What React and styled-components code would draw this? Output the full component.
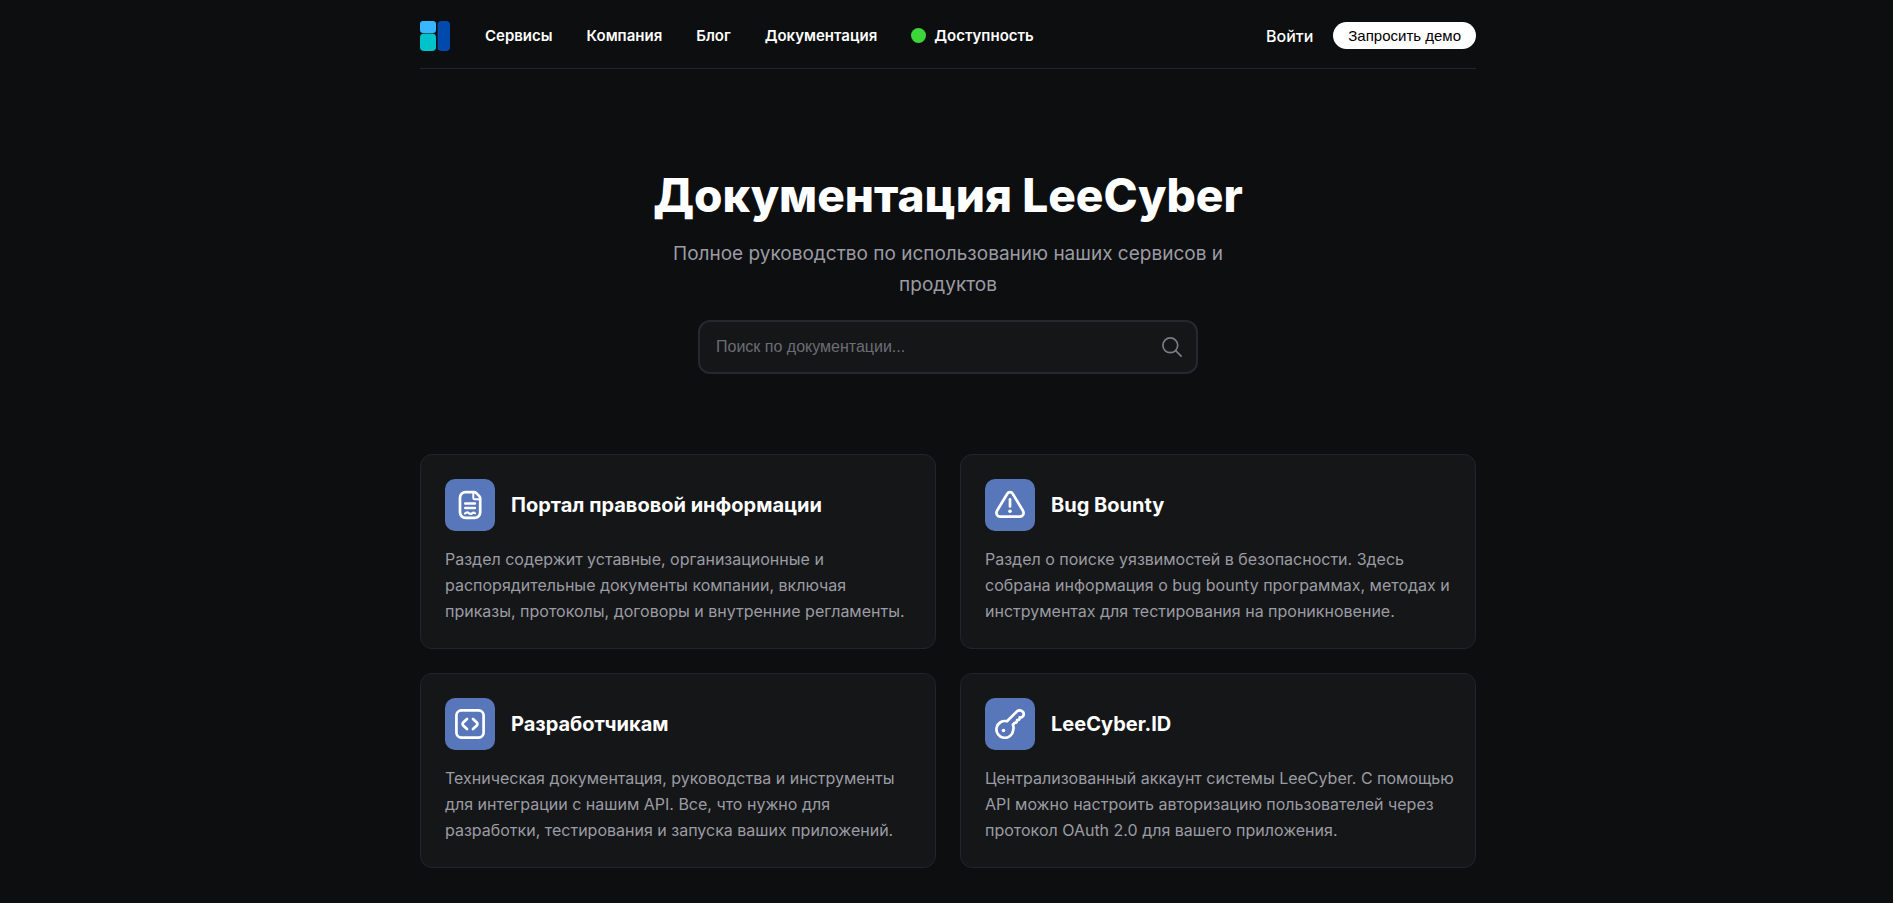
import React, { useState } from 'react'
import styled, { createGlobalStyle } from 'styled-components'

const GlobalStyle = createGlobalStyle`
  * {
    box-sizing: border-box;
  }
  body {
    margin: 0;
    background-color: #0d0e10;
    color: #ffffff;
    font-family: Inter, 'Noto Sans', sans-serif;
  }
`

const Page = styled.div`
  padding: 0 0 34px 3px;
`

const Container = styled.div`
  width: 100%;
  max-width: 1056px;
  margin: 0 auto;
`

const Header = styled.header`
  display: flex;
  align-items: center;
  height: 69px;
  padding-top: 3px;
  border-bottom: 1px solid #232427;
`

const LogoLink = styled.a`
  display: flex;
  margin-right: 35px;
`

const Nav = styled.nav`
  display: flex;
  align-items: center;
  gap: 34px;
`

const NavLink = styled.a`
  display: flex;
  align-items: center;
  color: #ffffff;
  font-size: 15px;
  font-weight: 600;
  line-height: 20px;
  text-decoration: none;
`

const StatusDot = styled.span`
  width: 15px;
  height: 15px;
  margin-right: 8px;
  border-radius: 50%;
  background-color: #3dd63a;
`

const Actions = styled.div`
  display: flex;
  align-items: center;
  gap: 20px;
  margin-left: auto;
`

const LoginLink = styled.a`
  color: #ffffff;
  font-size: 16px;
  font-weight: 500;
  line-height: 20px;
  text-decoration: none;
`

const DemoButton = styled.button`
  height: 27px;
  padding: 0 15px;
  border: none;
  border-radius: 14px;
  background-color: #ffffff;
  color: #000000;
  font-family: 'Liberation Sans', Arial, sans-serif;
  font-size: 15px;
  cursor: pointer;
`

const Hero = styled.section`
  display: flex;
  flex-flow: column;
  align-items: center;
  padding: 96px 0 80px;
  text-align: center;
`

const Title = styled.h1`
  margin: 0 0 13px;
  font-size: 46px;
  font-weight: 800;
  line-height: 60px;
`

const Subtitle = styled.p`
  max-width: 600px;
  margin: 0 0 20px;
  color: #9b9ca3;
  font-size: 19px;
  line-height: 31px;
`

const SearchBox = styled.form`
  display: flex;
  align-items: center;
  width: 100%;
  max-width: 500px;
  height: 54px;
  padding: 0 14px 0 16px;
  border: 2px solid #27282b;
  border-radius: 12px;
  background-color: #151618;
`

const SearchInput = styled.input`
  flex: 1;
  min-width: 0;
  padding: 0;
  border: none;
  outline: none;
  background: none;
  color: #ffffff;
  font-family: 'Liberation Sans', Arial, sans-serif;
  font-size: 16px;
  &::placeholder {
    color: #6c6d74;
    opacity: 1;
  }
`

const SearchButton = styled.button`
  display: flex;
  padding: 0;
  border: none;
  background: none;
  color: #7b7c83;
  cursor: pointer;
`

const Cards = styled.main`
  display: grid;
  grid-template-columns: repeat(2, 1fr);
  gap: 24px;
`

const Card = styled.a`
  display: block;
  padding: 24px 20px 24px 24px;
  border: 1px solid #232427;
  border-radius: 12px;
  background-color: #151618;
  color: #ffffff;
  text-decoration: none;
`

const CardHead = styled.div`
  display: flex;
  align-items: center;
  margin-bottom: 15px;
`

const CardIcon = styled.span`
  display: flex;
  align-items: center;
  justify-content: center;
  width: 50px;
  height: 52px;
  margin-right: 16px;
  border-radius: 10px;
  background-color: #5876ba;
`

const CardTitle = styled.h2`
  margin: 0;
  font-size: 20px;
  font-weight: 700;
  line-height: 26px;
`

const CardText = styled.p`
  margin: 0;
  color: #9b9ca3;
  font-size: 16px;
  line-height: 26px;
`

const Logo = () => (
  <svg width='30' height='30' viewBox='0 0 30 30' aria-hidden='true'>
    <rect x='0' y='0' width='16' height='12' rx='3' fill='#38b6ff' />
    <rect x='0' y='12.600' width='16' height='17.400' rx='4' fill='#00c2cb' />
    <rect x='17.600' y='0' width='12.400' height='30' rx='4' fill='#004aad' />
  </svg>
)

const IconSvg = ({ children }) => (
  <svg
    width='30'
    height='30'
    viewBox='0 0 30 30'
    fill='none'
    stroke='#ffffff'
    strokeWidth='2.7'
    strokeLinecap='round'
    strokeLinejoin='round'
    aria-hidden='true'
  >
    {children}
  </svg>
)

const DocumentIcon = () => (
  <IconSvg>
    <path d='M10.500 2.200h8.700a3 3 0 0 1 2.100.9l3 3a3 3 0 0 1 .9 2.100V22.300a5.500 5.500 0 0 1-5.500 5.500h-9.200A5.500 5.500 0 0 1 5 22.300V7.700a5.500 5.500 0 0 1 5.500-5.500z' />
    <path d='M18.300 2.800v5a1.500 1.500 0 0 0 1.500 1.500h4.800' strokeWidth='2' />
    <path d='M10.200 13.500h9.800M10.200 18h9.800' strokeWidth='2.400' />
    <path d='M10 23.500c1.300-1.400 2.700-1.400 3.800-.4s2.200 1 3.200.2 2-.9 3 0' strokeWidth='2.200' />
  </IconSvg>
)

const WarningIcon = () => (
  <IconSvg>
    <path d='M12.300 3.700 2 20.800C.5 23.600 2.200 26.600 5.300 26.600h19.400c3.100 0 4.800-3 3.300-5.800L17.700 3.700a3.100 3.100 0 0 0-5.400 0z' />
    <path d='M15 9.400v7' />
    <circle cx='15' cy='21.200' r='1.800' fill='#ffffff' stroke='none' />
  </IconSvg>
)

const CodeIcon = () => (
  <IconSvg>
    <rect x='1.400' y='1.400' width='27.200' height='27.200' rx='5' />
    <path d='M12 10 8.200 13.600a1.900 1.900 0 0 0 0 2.800L12 20M18 10l3.800 3.600a1.900 1.900 0 0 1 0 2.800L18 20' />
  </IconSvg>
)

const KeyIcon = () => (
  <IconSvg>
    <path d='M12 12.300 21.700 2.600C23 1.300 25.300 1.100 27 2.200c1.700 1.200 2 3.300 1.200 4.900-.9 1.400-2.400 1.600-3.500 1.300.2 1.700-.8 2.900-2.600 2.700.1 1.700-.7 2.500-2.300 2.700l-1.900 2c.7 1.700.8 3.500.3 5.300a8.400 8.400 0 1 1-6.200-8.800z' />
    <circle cx='8.500' cy='21.500' r='1.800' fill='#ffffff' stroke='none' />
  </IconSvg>
)

const SearchIcon = () => (
  <svg
    width='20'
    height='20'
    viewBox='0 0 20 20'
    fill='none'
    stroke='currentColor'
    strokeWidth='1.700'
    strokeLinecap='round'
    aria-hidden='true'
  >
    <circle cx='8.300' cy='8.300' r='7.400' />
    <path d='m13.700 13.700 5.400 5.400' />
  </svg>
)

const cards = [
  {
    title: 'Портал правовой информации',
    text:
      'Раздел содержит уставные, организационные и распорядительные документы компании, включая приказы, протоколы, договоры и внутренние регламенты.',
    Icon: DocumentIcon
  },
  {
    title: 'Bug Bounty',
    text:
      'Раздел о поиске уязвимостей в безопасности. Здесь собрана информация о bug bounty программах, методах и инструментах для тестирования на проникновение.',
    Icon: WarningIcon
  },
  {
    title: 'Разработчикам',
    text:
      'Техническая документация, руководства и инструменты для интеграции с нашим API. Все, что нужно для разработки, тестирования и запуска ваших приложений.',
    Icon: CodeIcon
  },
  {
    title: 'LeeCyber.ID',
    text:
      'Централизованный аккаунт системы LeeCyber. С помощью API можно настроить авторизацию пользователей через протокол OAuth 2.0 для вашего приложения.',
    Icon: KeyIcon
  }
]

const App = () => {
  const [query, setQuery] = useState('')

  return (
    <Page>
      <GlobalStyle />
      <Container>
        <Header>
          <LogoLink href='#' aria-label='LeeCyber'>
            <Logo />
          </LogoLink>
          <Nav>
            <NavLink href='#'>Сервисы</NavLink>
            <NavLink href='#'>Компания</NavLink>
            <NavLink href='#'>Блог</NavLink>
            <NavLink href='#'>Документация</NavLink>
            <NavLink href='#'>
              <StatusDot />
              Доступность
            </NavLink>
          </Nav>
          <Actions>
            <LoginLink href='#'>Войти</LoginLink>
            <DemoButton type='button'>Запросить демо</DemoButton>
          </Actions>
        </Header>

        <Hero>
          <Title>Документация LeeCyber</Title>
          <Subtitle>
            Полное руководство по использованию наших сервисов и продуктов
          </Subtitle>
          <SearchBox role='search' onSubmit={e => e.preventDefault()}>
            <SearchInput
              type='text'
              aria-label='Поиск по документации'
              placeholder='Поиск по документации...'
              value={query}
              onChange={e => setQuery(e.target.value)}
            />
            <SearchButton type='submit' aria-label='Найти'>
              <SearchIcon />
            </SearchButton>
          </SearchBox>
        </Hero>

        <Cards>
          {cards.map(({ title, text, Icon }) => (
            <Card href='#' key={title}>
              <CardHead>
                <CardIcon>
                  <Icon />
                </CardIcon>
                <CardTitle>{title}</CardTitle>
              </CardHead>
              <CardText>{text}</CardText>
            </Card>
          ))}
        </Cards>
      </Container>
    </Page>
  )
}

export default App
